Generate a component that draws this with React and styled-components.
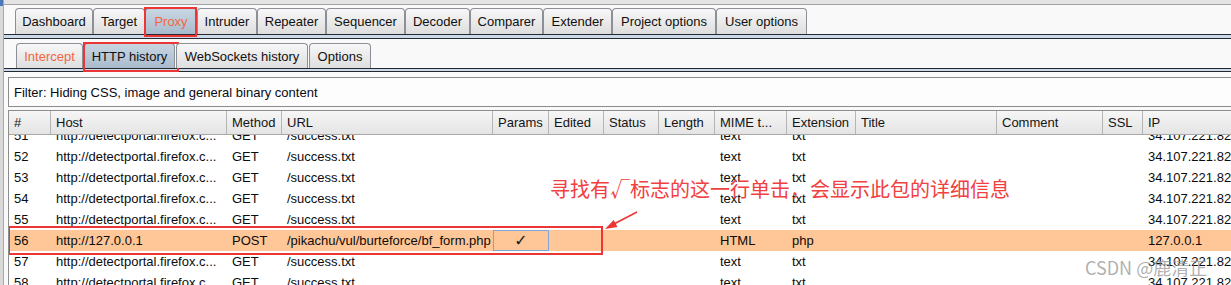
import React from 'react'
import styled, { createGlobalStyle } from 'styled-components'

const MAIN_TABS = [
  { label: 'Dashboard', width: 78 },
  { label: 'Target', width: 52 },
  { label: 'Proxy', width: 52, active: true, alert: true, marked: true },
  { label: 'Intruder', width: 60 },
  { label: 'Repeater', width: 69 },
  { label: 'Sequencer', width: 79 },
  { label: 'Decoder', width: 65 },
  { label: 'Comparer', width: 73 },
  { label: 'Extender', width: 69 },
  { label: 'Project options', width: 104 },
  { label: 'User options', width: 91 },
]

const SUB_TABS = [
  { label: 'Intercept', width: 67, alert: true },
  { label: 'HTTP history', width: 91, active: true, marked: true },
  { label: 'WebSockets history', width: 132 },
  { label: 'Options', width: 62 },
]

const COLUMNS = ['#', 'Host', 'Method', 'URL', 'Params', 'Edited', 'Status', 'Length', 'MIME t...', 'Extension', 'Title', 'Comment', 'SSL', 'IP']
const GRID = '42px 176px 55px 211px 56px 55px 55px 56px 72px 69px 141px 106px 40px 120px'

const FIREFOX = {
  host: 'http://detectportal.firefox.c...',
  method: 'GET',
  url: '/success.txt',
  mime: 'text',
  ext: 'txt',
  ip: '34.107.221.82',
}

const ROWS = [
  { id: 51, ...FIREFOX },
  { id: 52, ...FIREFOX },
  { id: 53, ...FIREFOX },
  { id: 54, ...FIREFOX },
  { id: 55, ...FIREFOX },
  {
    id: 56,
    host: 'http://127.0.0.1',
    method: 'POST',
    url: '/pikachu/vul/burteforce/bf_form.php',
    params: true,
    mime: 'HTML',
    ext: 'php',
    ip: '127.0.0.1',
    selected: true,
  },
  { id: 57, ...FIREFOX },
  { id: 58, ...FIREFOX },
]

const GlobalStyle = createGlobalStyle`
  html, body {
    margin: 0;
    padding: 0;
    overflow: hidden;
    background: #f9f9f9;
  }
  body {
    font-family: "Liberation Sans", Arial, sans-serif;
    font-size: 13px;
    color: #000;
  }
`

const Frame = styled.div`
  position: relative;
  display: flex;
  width: 1231px;
  height: 285px;
  overflow: hidden;
`

const WindowEdge = styled.div`
  width: 3px;
  flex: none;
  background: linear-gradient(#4a78b8 0 6px, #d9d9d9 6px);
  border-right: 1px solid #a9a9a9;
`

const Main = styled.div`
  flex: 1;
  min-width: 0;
  display: flex;
  flex-direction: column;
`

const TopStrip = styled.div`
  height: 4px;
  background: #e4e4e4;
  border-bottom: 1px solid #a3a3a3;
`

const TabBar = styled.div`
  display: flex;
  align-items: flex-end;
  padding: ${p => (p.sub ? '4px 0 0 12px' : '3px 0 0 11px')};
  background: #f9f9f9;
`

const Tab = styled.div`
  position: relative;
  box-sizing: border-box;
  width: ${p => p.width}px;
  height: ${p => (p.sub ? 25 : 26)}px;
  display: flex;
  align-items: center;
  justify-content: center;
  border: 1px solid #8c8f96;
  border-bottom: none;
  border-radius: 4px 4px 0 0;
  margin-right: ${p => (p.sub ? 1 : 0)}px;
  background: ${p =>
    p.active
      ? 'linear-gradient(#c9d6e2, #a8bbcd)'
      : 'linear-gradient(#f7f7f7, #dedede)'};
  color: ${p => (p.alert ? '#f2663f' : '#101010')};
  white-space: nowrap;
`

const TabMark = styled.div`
  position: absolute;
  left: -2px;
  right: ${p => (p.sub ? -5 : -1)}px;
  top: -2px;
  bottom: ${p => (p.sub ? -4 : -3)}px;
  border: 2px solid #ec3535;
  pointer-events: none;
`

const ContentEdge = styled.div`
  height: ${p => (p.sub ? 2 : 3)}px;
  background: #cbd9e8;
  border-top: 1px solid #262a30;
  border-bottom: 1px solid #262a30;
`

const FilterArea = styled.div`
  padding: 5px 0 0 4px;
  background: #fbfbfb;
`

const FilterBox = styled.div`
  height: 28px;
  margin-right: -20px;
  display: flex;
  align-items: center;
  padding-left: 5px;
  border: 1px solid #8d8d8d;
  background: #fdfdfd;
  color: #0a0a14;
`

const Table = styled.div`
  margin: 3px 0 0 4px;
  border-top: 1px solid #8d8d8d;
  border-left: 1px solid #8d8d8d;
  background: #fff;
  flex: 1;
  min-height: 0;
  display: flex;
  flex-direction: column;
`

const HeaderRow = styled.div`
  display: grid;
  grid-template-columns: ${GRID};
  height: 23px;
  background: linear-gradient(#f6f6f6, #e4e4e4);
  border-bottom: 1px solid #a9a9a9;
  position: relative;
  z-index: 3;
`

const HeaderCell = styled.div`
  padding-left: 5px;
  line-height: 23px;
  border-right: 1px solid #b5b5b5;
  color: #141414;
  white-space: nowrap;
  overflow: hidden;
`

const Body = styled.div`
  flex: 1;
  min-height: 0;
  overflow: hidden;
`

const Rows = styled.div`
  margin-top: -10px;
`

const Row = styled.div`
  position: relative;
  display: grid;
  grid-template-columns: ${GRID};
  height: 21px;
  background: ${p => (p.selected ? '#ffc697' : '#fff')};
  z-index: ${p => (p.selected ? 2 : 'auto')};
`

const Cell = styled.div`
  padding-left: 5px;
  line-height: 21px;
  white-space: nowrap;
  overflow: hidden;
  color: #0c0c0c;
`

const CheckCell = styled.div`
  display: flex;
  align-items: center;
  justify-content: center;
  border: 1px solid #7fa6d6;
  font-family: "DejaVu Sans", sans-serif;
  font-size: 16px;
  color: #1a1a1a;
`

const RowMark = styled.div`
  position: absolute;
  left: -1px;
  width: 591px;
  top: -4px;
  bottom: -4px;
  border: 2px solid #ec3535;
  pointer-events: none;
`

const Note = styled.div`
  position: absolute;
  left: 550px;
  top: 176px;
  font-family: "Noto Sans CJK SC", "Noto Sans", sans-serif;
  font-size: 20px;
  line-height: 26px;
  color: #f0403f;
  white-space: nowrap;
`

const Arrow = styled.svg`
  position: absolute;
  left: 600px;
  top: 205px;
  overflow: visible;
`

const Watermark = styled.div`
  position: absolute;
  left: 1085px;
  top: 255px;
  font-family: "Noto Sans CJK SC", "Noto Sans", sans-serif;
  font-size: 18px;
  line-height: 24px;
  color: rgba(150, 150, 150, 0.75);
  white-space: nowrap;
`

const TableRow = ({ row }) => (
  <Row selected={row.selected}>
    <Cell>{row.id}</Cell>
    <Cell>{row.host}</Cell>
    <Cell>{row.method}</Cell>
    <Cell>{row.url}</Cell>
    {row.params ? <CheckCell>✓</CheckCell> : <Cell />}
    <Cell />
    <Cell />
    <Cell />
    <Cell>{row.mime}</Cell>
    <Cell>{row.ext}</Cell>
    <Cell />
    <Cell />
    <Cell />
    <Cell>{row.ip}</Cell>
    {row.selected && <RowMark />}
  </Row>
)

const App = () => (
  <>
    <GlobalStyle />
    <Frame>
      <WindowEdge />
      <Main>
        <TopStrip />
        <TabBar>
          {MAIN_TABS.map(tab => (
            <Tab key={tab.label} width={tab.width} active={tab.active} alert={tab.alert}>
              {tab.label}
              {tab.marked && <TabMark />}
            </Tab>
          ))}
        </TabBar>
        <ContentEdge />
        <TabBar sub>
          {SUB_TABS.map(tab => (
            <Tab key={tab.label} sub width={tab.width} active={tab.active} alert={tab.alert}>
              {tab.label}
              {tab.marked && <TabMark sub />}
            </Tab>
          ))}
        </TabBar>
        <ContentEdge sub />
        <FilterArea>
          <FilterBox>Filter: Hiding CSS, image and general binary content</FilterBox>
        </FilterArea>
        <Table>
          <HeaderRow>
            {COLUMNS.map(col => (
              <HeaderCell key={col}>{col}</HeaderCell>
            ))}
          </HeaderRow>
          <Body>
            <Rows>
              {ROWS.map(row => (
                <TableRow key={row.id} row={row} />
              ))}
            </Rows>
          </Body>
        </Table>
      </Main>
      <Note>寻找有√标志的这一行单击，会显示此包的详细信息</Note>
      <Arrow width="45" height="30" viewBox="0 0 45 30">
        <line x1="37" y1="7" x2="12" y2="20" stroke="#ec3535" strokeWidth="1.6" />
        <polygon points="5,24 17.5,21.9 13.7,14.9" fill="#ec3535" />
      </Arrow>
      <Watermark>CSDN @鹿清正</Watermark>
    </Frame>
  </>
)

export default App
